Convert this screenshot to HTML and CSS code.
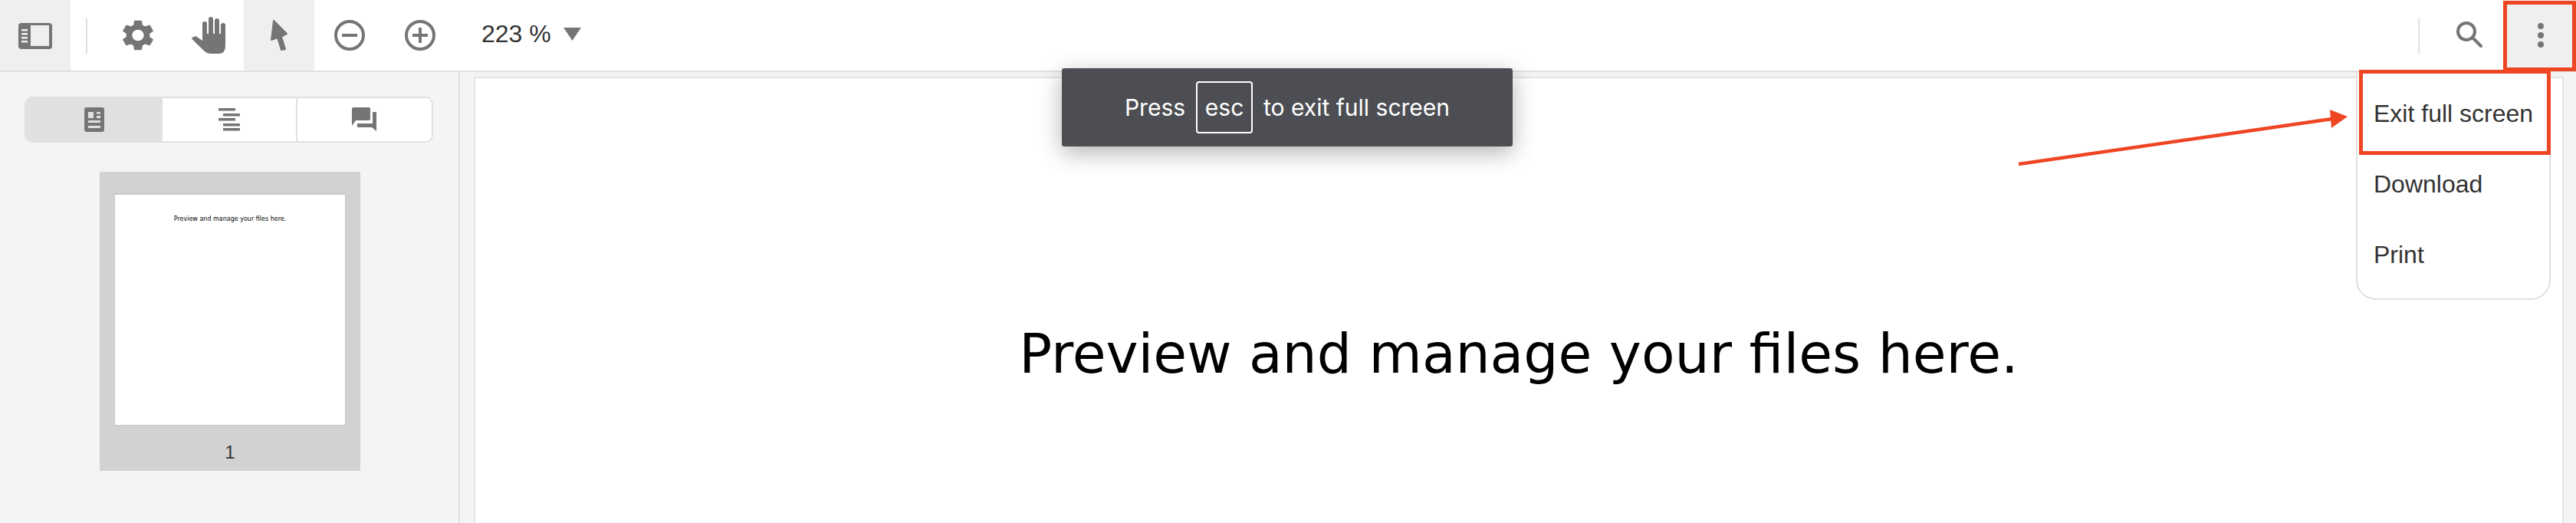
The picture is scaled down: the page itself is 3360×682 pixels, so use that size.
FILE: index.html
```html
<!DOCTYPE html>
<html lang="en">
<head>
    <meta charset="UTF-8">
    <title>PDF viewer</title>
    <link rel="stylesheet" href="styles.css">
</head>
<body>
    <header class="toolbar">
        <button class="tool active">
            <svg class="icon toggle-icon" width="44" height="34" viewBox="0 0 44 34">
                <rect width="44" height="34" rx="4" fill="#757575"/>
                <rect x="16" y="3" width="24" height="27" fill="#efefef"/>
                <path d="M4 8h8v2.500H4zM4 13h8v2.500H4zM4 18h8v2.500H4zM4 23h8v2.500H4z" fill="#efefef"/>
            </svg>
        </button>
        <span class="divider"></span>
        <button class="tool">
            <svg class="icon" width="40" height="40" viewBox="2.6 2 18.800 20" preserveAspectRatio="none">
                <path fill="#757575" d="M19.140 12.940c.04-.3.06-.61.06-.94 0-.32-.02-.64-.07-.94l2.030-1.580c.18-.14.23-.41.12-.61l-1.920-3.320c-.12-.22-.37-.29-.59-.22l-2.390.96c-.5-.38-1.030-.7-1.620-.94l-.36-2.540c-.04-.24-.24-.41-.48-.41h-3.840c-.24 0-.43.17-.47.41l-.36 2.540c-.59.24-1.130.57-1.620.94l-2.390-.96c-.22-.08-.47 0-.59.22L2.740 8.870c-.12.21-.08.47.12.61l2.030 1.580c-.05.3-.09.63-.09.94s.02.64.07.94l-2.030 1.580c-.18.14-.23.41-.12.61l1.920 3.320c.12.22.37.29.59.22l2.390-.96c.5.38 1.030.7 1.620.94l.36 2.540c.05.24.24.41.48.41h3.840c.24 0 .44-.17.47-.41l.36-2.540c.59-.24 1.130-.56 1.620-.94l2.390.96c.22.08.47 0 .59-.22l1.920-3.320c.12-.22.07-.47-.12-.61l-2.010-1.580zM12 15.600c-1.980 0-3.600-1.620-3.600-3.600s1.620-3.600 3.600-3.600 3.600 1.620 3.600 3.600-1.620 3.600-3.600 3.600z"/>
            </svg>
        </button>
        <button class="tool">
            <svg class="icon" width="44" height="48" viewBox="0 0 44 48">
                <g fill="#757575">
                    <rect x="14" y="6" width="6" height="30" rx="3"/>
                    <rect x="22" y="0" width="6" height="30" rx="3"/>
                    <rect x="30" y="2" width="6" height="30" rx="3"/>
                    <rect x="38" y="8" width="6" height="30" rx="3"/>
                    <path d="M14 22H44V38Q44 48 35 48H24Q20 48 17 45L0.500 29Q-.5 28 1 27L4 25.500Q5 25 6 25.500L14 31Z"/>
                </g>
            </svg>
        </button>
        <button class="tool active">
            <svg class="icon" width="24" height="42" viewBox="0 0 24 42">
                <path fill="#757575" stroke="#757575" stroke-width="2" stroke-linejoin="round" d="M5 2L22 19L15 23L20 39L15 40L10 24L2 27Z"/>
            </svg>
        </button>
        <button class="tool">
            <svg class="icon" width="40" height="40" viewBox="0 0 40 40">
                <circle cx="20" cy="20" r="18" fill="none" stroke="#757575" stroke-width="4"/>
                <rect x="10" y="18" width="20" height="4" fill="#757575"/>
            </svg>
        </button>
        <button class="tool">
            <svg class="icon" width="40" height="40" viewBox="0 0 40 40">
                <circle cx="20" cy="20" r="18" fill="none" stroke="#757575" stroke-width="4"/>
                <path d="M10 18h8v-8h4v8h8v4h-8v8h-4v-8h-8z" fill="#757575"/>
            </svg>
        </button>
        <div class="zoom-select">
            <span>223 %</span>
            <svg width="23" height="17" viewBox="0 0 23 17"><path d="M0 0H23L11.500 17Z" fill="#757575"/></svg>
        </div>
        <span class="spacer"></span>
        <span class="divider"></span>
        <button class="tool">
            <svg class="icon search-icon" width="34" height="34" viewBox="0 0 34 34">
                <circle cx="13" cy="13" r="11" fill="none" stroke="#757575" stroke-width="4"/>
                <path d="M21 21L32 32" stroke="#757575" stroke-width="4" stroke-linecap="round"/>
            </svg>
        </button>
        <button class="tool active">
            <svg class="icon" width="8" height="32" viewBox="0 0 8 32">
                <circle cx="4" cy="4" r="4" fill="#757575"/>
                <circle cx="4" cy="16" r="4" fill="#757575"/>
                <circle cx="4" cy="28" r="4" fill="#757575"/>
            </svg>
        </button>
    </header>

    <div class="workspace">
        <aside class="sidebar">
            <div class="tabs">
                <button class="tab selected">
                    <svg width="26" height="32" viewBox="0 0 26 32">
                        <rect width="26" height="32" rx="3" fill="#757575"/>
                        <path d="M5 6h7v8H5zM16 6h5v2.500h-5zM16 11h5v3h-5zM5 17h16v3H5zM5 24h16v3H5z" fill="#e0e0e0"/>
                    </svg>
                </button>
                <button class="tab">
                    <svg width="28" height="30" viewBox="0 0 28 30">
                        <path d="M0 0h22v3.500H0zM6 7h22v3.500H6zM0 13h22v3.500H0zM6 20h22v3.500H6zM6 26h22v3.500H6z" fill="#757575"/>
                    </svg>
                </button>
                <button class="tab">
                    <svg width="32" height="32" viewBox="0 0 32 32">
                        <path d="M0 2Q0 0 2 0H22Q24 0 24 2V15Q24 17 22 17H5L0 24Z" fill="#757575"/>
                        <path d="M27 6H32V31L26 26H7V21H27Z" fill="#757575"/>
                    </svg>
                </button>
            </div>
            <div class="thumb">
                <div class="thumb-page">Preview and manage your files here.</div>
                <div class="thumb-num">1</div>
            </div>
        </aside>
        <main class="viewer">
            <div class="page">
                <p>Preview and manage your files here.</p>
            </div>
        </main>
    </div>

    <div class="toast">
        <span>Press</span>
        <kbd>esc</kbd>
        <span>to exit full screen</span>
    </div>

    <ul class="menu">
        <li>Exit full screen</li>
        <li>Download</li>
        <li>Print</li>
    </ul>

    <!-- red annotations on top of the screenshot -->
    <div class="mark mark-more"></div>
    <div class="mark mark-item"></div>
    <svg class="arrow" width="440" height="80" viewBox="0 0 440 80">
        <path d="M3 74L412 15" stroke="#ee4523" stroke-width="4.500" fill="none"/>
        <path d="M432 12L409 3L411 27Z" fill="#ee4523"/>
    </svg>
</body>
</html>
```

FILE: styles.css
```css
* {
    box-sizing: border-box;
}

html, body {
    margin: 0;
    height: 100%;
}

body {
    display: flex;
    flex-direction: column;
    height: 100vh;
    overflow: hidden;
    font-family: "Liberation Sans", Arial, sans-serif;
    color: #333;
    background: #f4f4f4;
}

.toolbar {
    display: flex;
    align-items: stretch;
    height: 94px;
    flex: none;
    background: #fff;
    border-bottom: 2px solid #e0e0e0;
}

.tool {
    display: flex;
    align-items: center;
    justify-content: center;
    width: 92px;
    height: 92px;
    padding: 0;
    border: none;
    background: transparent;
}

.tool.active {
    background: #efefef;
}

.icon {
    display: block;
}

.toggle-icon {
    margin-top: 2px;
}

.search-icon {
    margin: -2px 0 0 -2px;
}

.divider {
    width: 2px;
    height: 46px;
    margin: 24px 20px 0;
    background: #e0e0e0;
}

.zoom-select {
    display: flex;
    align-items: center;
    gap: 16px;
    margin-left: 34px;
    font-size: 32px;
    padding-bottom: 4px;
}

.spacer {
    flex: 1;
}

.workspace {
    display: flex;
    flex: 1;
    min-height: 0;
}

.sidebar {
    display: flex;
    flex-direction: column;
    align-items: center;
    width: 600px;
    flex: none;
    padding: 32px 34px 0 32px;
    border-right: 2px solid #e0e0e0;
    background: #f4f4f4;
}

.tabs {
    display: flex;
    width: 533px;
    height: 60px;
    flex: none;
    border: 2px solid #e0e0e0;
    border-radius: 10px;
    overflow: hidden;
    background: #fff;
}

.tab {
    display: flex;
    align-items: center;
    justify-content: center;
    flex: 1;
    padding: 0;
    border: none;
    background: #fff;
}

.tab + .tab + .tab {
    border-left: 2px solid #e0e0e0;
}

.tab.selected {
    flex: none;
    width: 178px;
    background: #e0e0e0;
}

.thumb {
    display: flex;
    flex-direction: column;
    align-items: center;
    width: 340px;
    height: 390px;
    margin: 38px 0 0 4px;
    padding-top: 28px;
    background: #d2d2d2;
}

.thumb-page {
    width: 304px;
    height: 304px;
    flex: none;
    padding-top: 26px;
    border: 2px solid #ccc;
    background: #fff;
    color: #000;
    font-family: "DejaVu Sans", sans-serif;
    font-size: 8px;
    line-height: 12px;
    text-align: center;
}

.thumb-num {
    margin-top: 20px;
    font-size: 24px;
    line-height: 28px;
}

.viewer {
    flex: 1;
    min-width: 0;
    padding: 8px 18px 0 20px;
    overflow: hidden;
}

.page {
    height: 100%;
    background: #fff;
    box-shadow: 0 0 0 2px #e4e4e4;
}

.page p {
    margin: 0;
    padding-top: 317px;
    color: #000;
    font-family: "DejaVu Sans", sans-serif;
    font-size: 71.2px;
    line-height: 86px;
    text-align: center;
}

.toast {
    position: absolute;
    left: 1385px;
    top: 89px;
    display: flex;
    align-items: center;
    justify-content: center;
    gap: 14px;
    width: 588px;
    height: 102px;
    border-radius: 3px;
    background: #4d4e53;
    box-shadow: 0 8px 30px rgba(0, 0, 0, 0.3);
    color: #fff;
    font-family: Inter, sans-serif;
    font-size: 30px;
}

.toast kbd {
    display: flex;
    align-items: center;
    justify-content: center;
    width: 74px;
    height: 68px;
    border: 2px solid #fff;
    border-radius: 4px;
    font: inherit;
}

.menu {
    position: absolute;
    left: 3073px;
    top: 94px;
    width: 254px;
    height: 297px;
    margin: 0;
    padding: 8px 0 0 21px;
    list-style: none;
    border: 2px solid #e0e0e0;
    border-top: none;
    border-radius: 0 0 26px 26px;
    background: #fff;
    font-size: 32px;
}

.menu li {
    height: 92px;
    line-height: 92px;
}

.mark {
    position: absolute;
    border: 5px solid #ee4523;
}

.mark-more {
    left: 3265px;
    top: 1px;
    width: 95px;
    height: 92px;
}

.mark-item {
    left: 3077px;
    top: 91px;
    width: 250px;
    height: 111px;
}

.arrow {
    position: absolute;
    left: 2630px;
    top: 140px;
}
```
